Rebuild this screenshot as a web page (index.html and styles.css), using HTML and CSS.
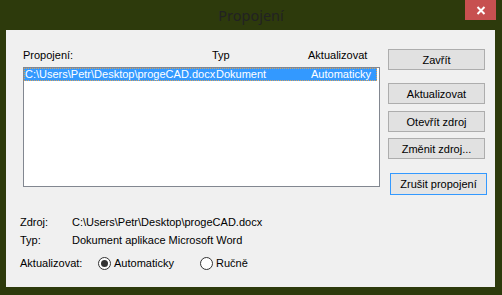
FILE: index.html
```html
<!DOCTYPE html>
<html lang="cs">
<head>
    <meta charset="UTF-8">
    <title>Propojení</title>
    <link rel="stylesheet" href="styles.css">
</head>
<body>
    <div class="window">
        <div class="titlebar">
            <div class="title">Propojení</div>
            <div class="close">
                <svg width="10" height="9" viewBox="0 0 10 9">
                    <path d="M1.5 1 L8.5 8 M8.5 1 L1.5 8" stroke="#fff" stroke-width="2" fill="none"/>
                </svg>
            </div>
        </div>

        <div class="client">
            <div class="top">
                <div class="links">
                    <div class="links-head">
                        <span class="col-src">Propojení:</span>
                        <span class="col-type">Typ</span>
                        <span>Aktualizovat</span>
                    </div>
                    <div class="listbox">
                        <div class="row selected">
                            <span class="cell-src">C:\Users\Petr\Desktop\progeCAD.docx</span>
                            <span class="cell-type">Dokument</span>
                            <span>Automaticky</span>
                        </div>
                    </div>
                </div>

                <div class="buttons">
                    <button class="btn">Zavřít</button>
                    <button class="btn btn-update">Aktualizovat</button>
                    <button class="btn btn-open">Otevřít zdroj</button>
                    <button class="btn btn-change">Změnit zdroj...</button>
                    <button class="btn btn-break focused">Zrušit propojení</button>
                </div>
            </div>

            <div class="info">
                <div class="info-row">
                    <span class="info-label">Zdroj:</span>
                    <span>C:\Users\Petr\Desktop\progeCAD.docx</span>
                </div>
                <div class="info-row">
                    <span class="info-label">Typ:</span>
                    <span>Dokument aplikace Microsoft Word</span>
                </div>
                <div class="info-row update-row">
                    <span class="update-label">Aktualizovat:</span>
                    <label class="radio radio-auto"><span class="dot checked"></span>Automaticky</label>
                    <label class="radio"><span class="dot"></span>Ručně</label>
                </div>
            </div>
        </div>
    </div>
</body>
</html>
```

FILE: styles.css
```css
body {
    margin: 0;
    background-color: #2d3a0c;
    font-family: "Liberation Sans", Arial, sans-serif;
    font-size: 11px;
    color: #000;
}

.window {
    width: 502px;
    height: 295px;
}

.titlebar {
    height: 30px;
    display: grid;
    grid-template-columns: 1fr auto 1fr;
    align-items: start;
}

.title {
    grid-column: 2;
    line-height: 30px;
    font-family: "Noto Sans", sans-serif;
    font-size: 14.5px;
    color: #222;
}

.close {
    grid-column: 3;
    justify-self: end;
    width: 31px;
    height: 20px;
    margin-right: 6px;
    background-color: #c75050;
    display: flex;
    align-items: center;
    justify-content: center;
}

.client {
    margin: 0 7px 0 6px;
    height: 257px;
    background-color: #f0f0f0;
    box-sizing: border-box;
    padding: 19px 0 0 0;
}

.top {
    display: flex;
    align-items: flex-start;
    padding-left: 17px;
}

.links {
    width: 357px;
}

.links-head {
    height: 18px;
    line-height: 13px;
    display: flex;
}

.col-src {
    width: 189px;
}

.col-type {
    width: 96px;
}

.listbox {
    height: 120px;
    box-sizing: border-box;
    border: 1px solid #828790;
    background-color: #fff;
}

.row {
    height: 13px;
    line-height: 13px;
    margin-right: 2px;
    display: flex;
    white-space: nowrap;
    box-sizing: border-box;
}

.row.selected {
    background-color: #3399ff;
    color: #fff;
    outline: 1px dotted #d9a25c;
    outline-offset: -1px;
}

.cell-src {
    width: 191px;
    padding-left: 1px;
}

.cell-type {
    width: 95px;
}

.buttons {
    margin-left: 8px;
    display: flex;
    flex-direction: column;
    align-items: flex-start;
}

.btn {
    width: 97px;
    height: 21px;
    padding: 0;
    border: 1px solid #adadad;
    background-color: #e1e1e1;
    font-family: "Liberation Sans", Arial, sans-serif;
    font-size: 11px;
    color: #000;
}

.btn-update {
    margin-top: 13px;
}

.btn-open {
    margin-top: 7px;
}

.btn-change {
    margin-top: 6px;
}

.btn-break {
    margin-top: 14px;
    margin-left: 2px;
    height: 22px;
}

.btn.focused {
    border-color: #3399ff;
    background-color: #e5e5e5;
}

.info {
    margin-top: 18px;
    padding-left: 14px;
}

.info-row {
    display: flex;
    height: 18px;
    line-height: 18px;
    align-items: center;
}

.info-label {
    width: 52px;
}

.update-row {
    margin-top: 5px;
}

.update-label {
    width: 78px;
}

.radio {
    display: flex;
    align-items: center;
    gap: 3px;
}

.radio-auto {
    width: 102px;
}

.dot {
    width: 13px;
    height: 13px;
    box-sizing: border-box;
    border: 1px solid #333;
    border-radius: 50%;
    background-color: #fff;
    display: flex;
    align-items: center;
    justify-content: center;
}

.dot.checked::after {
    content: "";
    width: 7px;
    height: 7px;
    border-radius: 50%;
    background-color: #333;
}
```
